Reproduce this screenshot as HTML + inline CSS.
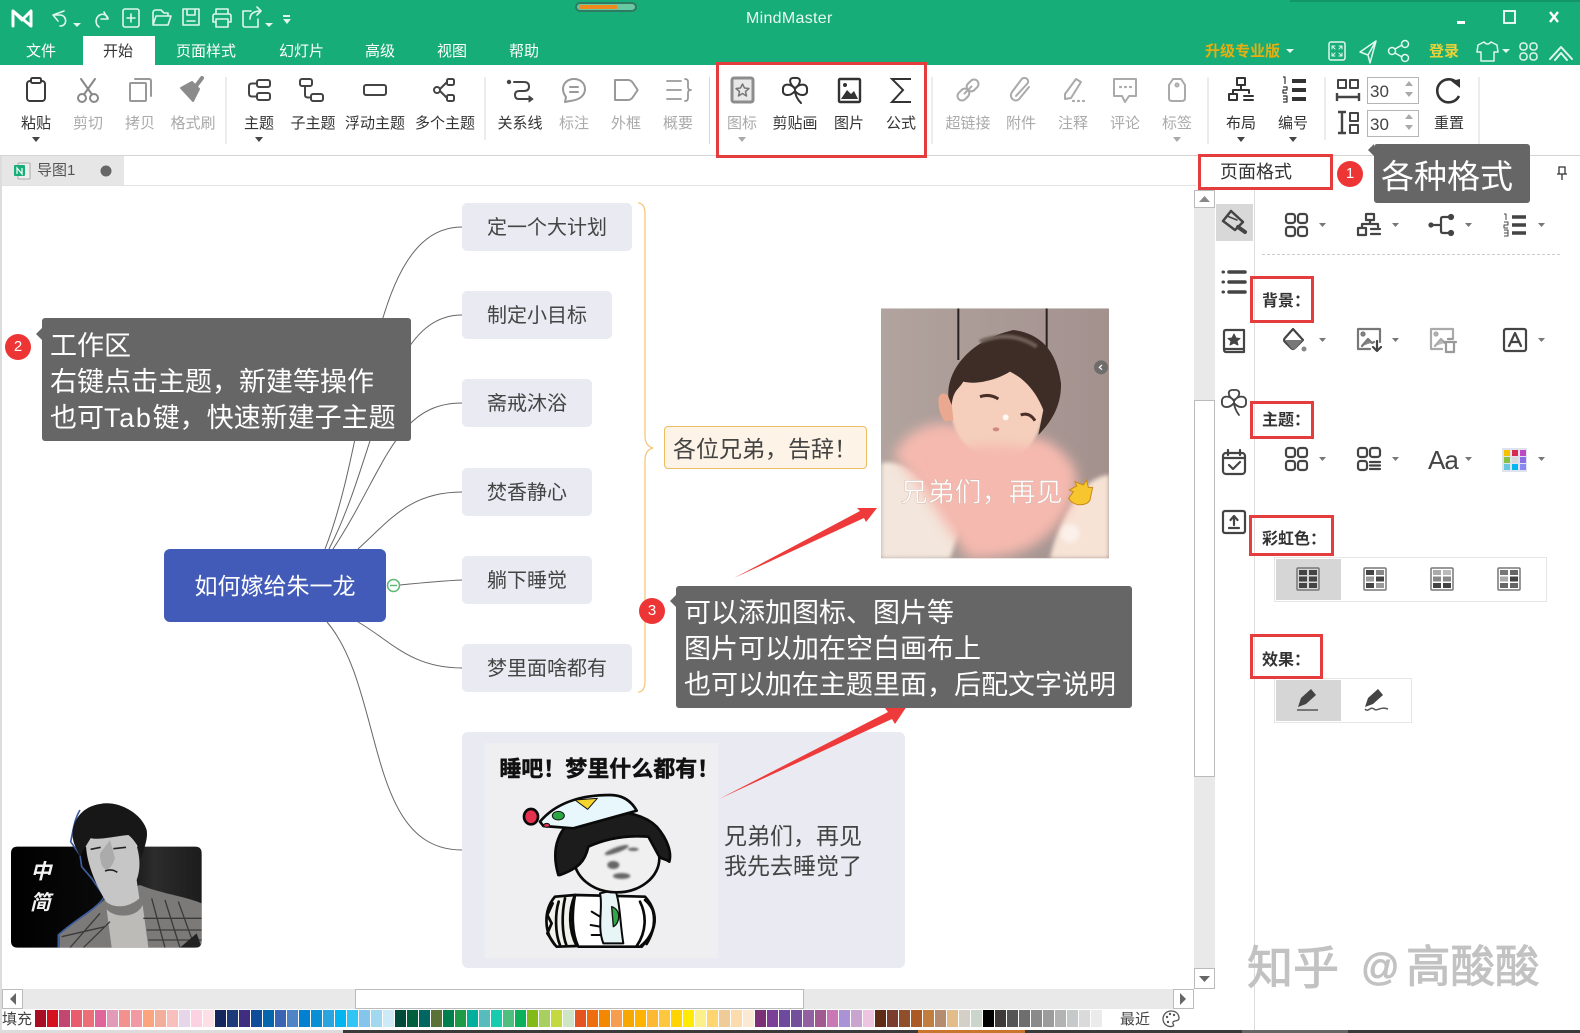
<!DOCTYPE html>
<html lang="zh">
<head>
<meta charset="utf-8">
<title>MindMaster</title>
<style>
html,body{margin:0;padding:0;background:#fff}
#p{position:relative;width:1580px;height:1033px;overflow:hidden;background:#fff;font-family:"Liberation Sans","Noto Sans CJK SC",sans-serif;color:#333}
#p div{position:absolute;box-sizing:border-box}
.c{white-space:nowrap;transform:translateX(-50%);font-size:15px;line-height:20px;top:114px;color:#333}
.g{color:#aaa}
.t{white-space:nowrap;font-size:15px;line-height:20px;top:42px;color:#fff}
.n{background:#e9eaf2;border-radius:5px;left:462px;height:48px;line-height:51px;padding-left:25px;font-size:20px;color:#444;white-space:nowrap}
.call{background:#666;border-radius:3px;color:#fff;font-size:27px;line-height:36px;white-space:nowrap}
.call:before{content:"";position:absolute;left:-6px;width:0;height:0;border:6px solid transparent;border-left:0;border-right-color:#666}
.b{width:26px;height:26px;border-radius:50%;background:#ee3535;color:#fff;font-size:15px;line-height:26px;text-align:center}
.r{border:3px solid #e53c3e}
.h{font-weight:700;font-size:16px;line-height:20px;color:#333;left:1262px;white-space:nowrap}
svg{position:absolute;left:0;top:0}
.s{display:flex;left:35px;top:1010px;height:17px}
.s i{display:block;width:11px;margin-right:1px;height:17px}
.w{top:938px;font-size:46px;line-height:60px;color:#c2c2c2;-webkit-text-stroke:1px #c2c2c2;white-space:nowrap}
</style>
</head>
<body>
<div id="p">
<div style="left:0;top:0;width:1580px;height:65px;background:#17ad78"></div>
<div style="left:1290px;top:0;width:290px;height:2px;background:#129568"></div>
<div style="left:83px;top:36px;width:72px;height:29px;background:#fff"></div>
<div class="t" style="left:26px">文件</div>
<div class="t" style="left:103px;color:#333">开始</div>
<div class="t" style="left:176px">页面样式</div>
<div class="t" style="left:279px">幻灯片</div>
<div class="t" style="left:365px">高级</div>
<div class="t" style="left:437px">视图</div>
<div class="t" style="left:509px">帮助</div>
<div style="left:746px;top:8px;font-size:16px;line-height:22px;color:#e8f8f2;letter-spacing:.3px">MindMaster</div>
<div style="left:575px;top:2px;width:62px;height:10px;border-radius:5px;background:#67c8a2;border:2px solid #2e7a62"></div>
<div style="left:579px;top:5px;width:38px;height:4px;background:#f08a1f"></div>
<div class="t" style="left:1205px;color:#e8ae10;font-weight:700;font-size:15px">升级专业版</div>
<div class="t" style="left:1429px;color:#e8d23a;font-weight:700">登录</div>

<!-- ribbon bottom -->
<div style="left:0;top:155px;width:1580px;height:1px;background:#d4d4d4"></div>
<div style="left:0;top:185px;width:1196px;height:1px;background:#e2e2e2"></div>
<div style="left:2px;top:156px;width:122px;height:29px;background:#e6e6e6"></div>
<div style="left:0;top:156px;width:2px;height:874px;background:#dcdcdc"></div>
<div style="left:37px;top:161px;font-size:15px;line-height:20px;color:#555">导图1</div>

<!-- ribbon labels -->
<div class="c" style="left:36px">粘贴</div>
<div class="c g" style="left:88px">剪切</div>
<div class="c g" style="left:140px">拷贝</div>
<div class="c g" style="left:193px">格式刷</div>
<div class="c" style="left:259px">主题</div>
<div class="c" style="left:313px">子主题</div>
<div class="c" style="left:375px">浮动主题</div>
<div class="c" style="left:445px">多个主题</div>
<div class="c" style="left:520px">关系线</div>
<div class="c g" style="left:574px">标注</div>
<div class="c g" style="left:626px">外框</div>
<div class="c g" style="left:678px">概要</div>
<div class="c g" style="left:742px">图标</div>
<div class="c" style="left:795px">剪贴画</div>
<div class="c" style="left:849px">图片</div>
<div class="c" style="left:901px">公式</div>
<div class="c g" style="left:968px">超链接</div>
<div class="c g" style="left:1021px">附件</div>
<div class="c g" style="left:1073px">注释</div>
<div class="c g" style="left:1125px">评论</div>
<div class="c g" style="left:1177px">标签</div>
<div class="c" style="left:1241px">布局</div>
<div class="c" style="left:1293px">编号</div>
<div class="c" style="left:1449px">重置</div>
<div style="left:1367px;top:77px;width:52px;height:27px;border:1px solid #b5b5b5;font-size:17px;line-height:28px;padding-left:2px;color:#444">30</div>
<div style="left:1367px;top:110px;width:52px;height:27px;border:1px solid #b5b5b5;font-size:17px;line-height:28px;padding-left:2px;color:#444">30</div>

<!-- connection lines -->
<svg width="1580" height="1033" fill="none" stroke="#666" stroke-width="1">
<path d="M325,549C372,430 368,227 462,227"/>
<path d="M329,549C378,455 385,315 462,315"/>
<path d="M333,549C385,470 395,403 462,403"/>
<path d="M358,549C390,520 410,492 462,492"/>
<path d="M400,585C420,583 440,581 462,580"/>
<path d="M358,622C390,640 410,668 462,668"/>
<path d="M327,622C385,690 365,850 462,850"/>
<path d="M638,203C643,203 645,207 645,214V436C645,444 649,447 653,448C649,449 645,452 645,460V681C645,688 643,692 638,692" stroke="#f4c878" stroke-width="1.300"/>
</svg>

<!-- nodes -->
<div style="left:164px;top:549px;width:222px;height:73px;background:#425bb9;border-radius:6px;color:#fff;font-size:23px;line-height:74px;text-align:center">如何嫁给朱一龙</div>
<div class="n" style="top:203px;width:170px">定一个大计划</div>
<div class="n" style="top:291px;width:150px">制定小目标</div>
<div class="n" style="top:379px;width:130px">斋戒沐浴</div>
<div class="n" style="top:468px;width:130px">焚香静心</div>
<div class="n" style="top:556px;width:130px">躺下睡觉</div>
<div class="n" style="top:644px;width:170px">梦里面啥都有</div>
<div style="left:664px;top:426px;width:203px;height:43px;background:#fdf3e6;border:1px solid #ecbd62;border-radius:4px;font-size:23px;line-height:44px;padding-left:8px;color:#444;white-space:nowrap">各位兄弟，告辞！</div>
<div style="left:462px;top:732px;width:443px;height:236px;background:#e9eaf2;border-radius:6px"></div>
<div style="left:485px;top:743px;width:233px;height:215px;background:#efeff1"></div>
<div style="left:724px;top:821px;font-size:23px;line-height:30px;color:#444;white-space:nowrap">兄弟们，再见<br>我先去睡觉了</div>

<!-- graphics -->
<svg width="1580" height="1033" fill="none">
<defs>
<filter id="f2" x="-30%" y="-30%" width="160%" height="160%"><feGaussianBlur stdDeviation="3"/></filter>
<filter id="f4" x="-30%" y="-30%" width="160%" height="160%"><feGaussianBlur stdDeviation="6"/></filter>
<filter id="f8" x="-30%" y="-30%" width="160%" height="160%"><feGaussianBlur stdDeviation="18"/></filter>
<linearGradient id="bg" x1="0" y1="0" x2="1" y2="0"><stop offset="0" stop-color="#b1a39e"/><stop offset="1" stop-color="#a3918e"/></linearGradient>
<linearGradient id="dk" x1="0" y1="0" x2="1" y2="0"><stop offset="0" stop-color="#000"/><stop offset=".55" stop-color="#0b0b0b"/><stop offset=".75" stop-color="#2c2c2c"/><stop offset="1" stop-color="#1c1c1c"/></linearGradient>
<clipPath id="ph"><rect x="33" y="25" width="684" height="750"/></clipPath>
<clipPath id="pc"><path d="M33,190Q33,170 53,170H585Q605,170 605,190V453Q605,473 585,473H53Q33,473 33,453Z"/></clipPath>
</defs>

<!-- title bar icons -->
<g stroke="#dff6ee" stroke-width="1.600" stroke-linecap="round" stroke-linejoin="round">
<path d="M13,26V11L22,20L31,11V26M13,11L31,26" stroke="#fff" stroke-width="3" stroke-linejoin="round"/>
<path d="M64,11L53,15L58,21M53,15H60C67,15 68,26 60,26"/>
<path d="M104,12L108,19L101,19M108,18C104,10 93,16 97,25L99,27"/>
<rect x="123" y="9" width="16" height="18" rx="2"/><path d="M131,14V22M127,18H135"/>
<path d="M153,24V13Q153,10 156,10H161L164,13H168V16M153,25L156,16H171L168,25Z"/>
<path d="M183,9H199V25H183ZM187,9V15H195V9M187,21H195"/>
<path d="M216,14V9H228V14M213,22V16Q213,14 215,14H229Q231,14 231,16V22H228M213,22H216M216,19H228V27H216Z"/>
<path d="M243,25V11H251M243,25Q243,27 245,27H258V19M250,19Q250,11 261,11M257,7L261,11L257,15"/>
</g>
<g fill="#dff6ee">
<path d="M73,23H81L77,27ZM265,23H273L269,27Z"/>
<path d="M283,15H290V17H283ZM283,19H291L287,24Z"/>
</g>
<path d="M1457,21H1465V24H1457Z" fill="#fff"/>
<path d="M1504,11H1515V23H1504Z" stroke="#fff" stroke-width="1.800"/>
<path d="M1550,12L1558,22M1558,12L1550,22" stroke="#fff" stroke-width="2.400"/>
<path d="M1286,49H1294L1290,53Z" fill="#e8f8f2"/>
<g stroke="#e2f7ef" stroke-width="1.500" stroke-linejoin="round" stroke-linecap="round">
<rect x="1329" y="42" width="16" height="18" rx="2"/>
<path d="M1332,46L1335,49M1332,46H1335M1332,46V49M1342,46L1339,49M1342,46H1339M1342,46V49M1332,56L1335,53M1332,56H1335M1332,56V53M1342,56L1339,53M1342,56H1339M1342,56V53" stroke-width="1"/>
<path d="M1376,41L1360,52L1368,55L1370,63ZM1376,41L1368,55"/>
<circle cx="1392" cy="51" r="3.500"/><circle cx="1405" cy="44" r="3.500"/><circle cx="1405" cy="58" r="3.500"/><path d="M1395,49L1402,45M1395,53L1402,57"/>
<path d="M1484,42L1478,45L1477,52L1481,52V61H1494V52L1498,52L1497,45L1491,42Q1487.500,46 1484,42Z"/>
<rect x="1520" y="43" width="7" height="7" rx="3"/><rect x="1530" y="43" width="7" height="7" rx="3"/><rect x="1520" y="53" width="7" height="7" rx="3"/><rect x="1530" y="53" width="7" height="7" rx="3"/>
<path d="M1550,59L1561,47L1572,59M1555,60L1561,53L1567,60" stroke-width="2"/>
</g>
<path d="M1502,49H1510L1506,53Z" fill="#e2f7ef"/>

<!-- separators -->
<path d="M226,77V144M485,77V140M709.500,77V144M932,77V144M1208,77V144M1325,77V140M1479,77V144" stroke="#d8d8d8"/>

<!-- ribbon icons -->
<g stroke-width="2" stroke-linejoin="round" stroke-linecap="round">
<g transform="translate(36,90)" stroke="#3a3a3a"><rect x="-9" y="-9" width="18" height="20" rx="3"/><rect x="-5" y="-12" width="10" height="5" rx="1.500" fill="#fff"/></g>
<g transform="translate(88,90)" stroke="#888"><circle cx="-6" cy="8" r="4"/><circle cx="6" cy="8" r="4"/><path d="M-4,4.500L7,-11M4,4.500L-7,-11"/></g>
<g transform="translate(140,90)" stroke="#999"><rect x="-10" y="-7" width="16" height="18" rx="1"/><path d="M-5,-11H9Q11,-11 11,-9V6"/></g>
<g transform="translate(192,90)"><path d="M-11,-2L0,-8L7,-1L1,11Z" fill="#8b8b8b" stroke="#8b8b8b"/><path d="M4,-4L10,-12" stroke="#8b8b8b" stroke-width="4"/></g>
<g transform="translate(259,90)" stroke="#444"><rect x="-2" y="-10" width="13" height="7" rx="2"/><rect x="-2" y="3" width="13" height="7" rx="2"/><path d="M-2,-6.500H-7Q-10,-6.500 -10,-3.500V3.500Q-10,6.500 -7,6.500H-2"/></g>
<g transform="translate(313,90)" stroke="#444"><rect x="-13" y="-11" width="12" height="7" rx="2"/><rect x="-2" y="4" width="12" height="7" rx="2"/><path d="M-8,-4V5Q-8,7.500 -5,7.500H-2"/></g>
<g transform="translate(375,90)" stroke="#444"><rect x="-11" y="-5" width="22" height="10" rx="2"/></g>
<g transform="translate(445,90)" stroke="#444"><circle cx="-8" cy="0" r="3"/><rect x="2" y="-11" width="7" height="6" rx="1.500"/><rect x="2" y="5" width="7" height="6" rx="1.500"/><path d="M-5,-1L2,-8M-5,1L2,8"/></g>
<g transform="translate(520,90)" stroke="#444"><circle cx="-11" cy="-8" r="1.200" fill="#444"/><path d="M-6,-8H4Q9,-8 9,-3.500Q9,1 4,1H-1Q-5,1 -5,5Q-5,9 -1,9H8"/><path d="M9,6L13,9L9,12Z" fill="#444" stroke-width="1"/></g>
<g transform="translate(574,90)" stroke="#999"><path d="M-4,11L-9,12L-8,7Q-11,3 -11,-1C-11,-7 -6,-11 0,-11C6,-11 11,-7 11,-1C11,6 5,10 -4,11Z"/><path d="M-4,-3H4M-4,2H4"/></g>
<g transform="translate(626,90)" stroke="#999"><path d="M-11,-10H2Q5,-10 7,-7L11,-1Q12,0 11,1L7,7Q5,10 2,10H-11Z"/></g>
<g transform="translate(678,90)" stroke="#999"><path d="M-11,-9H3M-11,0H3M-11,9H3M7,-11Q10,-11 10,-8V-3Q10,0 13,0Q10,0 10,3V8Q10,11 7,11" stroke-width="1.800"/></g>
<g transform="translate(742,90)"><rect x="-10" y="-12" width="21" height="24" rx="2" stroke="#8d8d8d" stroke-width="3" fill="#e8e8e8"/><path d="M.5,-6L2.500,-2L7,-1.500L3.500,1.500L4.500,6L.5,3.500L-3.500,6L-2.500,1.500L-6,-1.500L-1.500,-2Z" stroke="#777" stroke-width="1.500"/></g>
<g transform="translate(795,90)" stroke="#333"><path d="M0,-2C-6,-6 -7,-13 0,-12C7,-13 6,-6 0,-2ZM0,-1C-4,-7 -13,-7 -12,0C-13,6 -5,7 0,1ZM0,-1C4,-7 13,-7 12,0C13,6 5,7 0,1ZM0,0C0,5 2,9 6,13"/></g>
<g transform="translate(849,90)"><rect x="-10" y="-11" width="21" height="23" rx="1" stroke="#333" stroke-width="2.400"/><path d="M-8,9L-2,0L2,4L5,1L9,9Z" fill="#333"/><circle cx="-4" cy="-5" r="2" fill="#333"/></g>
<g transform="translate(901,90)" stroke="#333"><path d="M10,-11H-9L2,0L-9,12H10" stroke-linecap="butt" stroke-linejoin="miter"/></g>
<g transform="translate(968,90)" stroke="#aaa"><g transform="rotate(-45)"><rect x="-13" y="-4.500" width="13" height="9" rx="4.500"/><rect x="0" y="-4.500" width="13" height="9" rx="4.500"/><path d="M-5,0H5"/></g></g>
<g transform="translate(1021,90)" stroke="#aaa"><path d="M-5,6L6,-6C10,-10 3,-15 0,-10L-9,2C-13,8 -5,14 -1,8L8,-3"/></g>
<g transform="translate(1073,90)" stroke="#aaa"><path d="M-8,4L3,-11L8,-8L-2,8L-8,9Z"/><path d="M0,11H1M5,11H6M10,11H11" stroke-width="2.200"/></g>
<g transform="translate(1125,90)" stroke="#aaa"><path d="M-11,-11H11V6H4L0,12L-3,6H-11Z"/><path d="M-5,-3H-4M0,-3H1M5,-3H6" stroke-width="2.200"/></g>
<g transform="translate(1177,90)" stroke="#aaa"><path d="M-4,-11H4L8,-5V8Q8,11 5,11H-5Q-8,11 -8,8V-5Z"/><circle cx="0" cy="-5" r="1.500"/></g>
<g transform="translate(1241,90)" stroke="#333"><rect x="-4" y="-12" width="8" height="7"/><path d="M0,-5V0M-8,3V0H8V3"/><rect x="-12" y="4" width="8" height="6"/><path d="M3,6H12M3,10H12"/></g>
<g transform="translate(1293,90)"><path d="M-1,-9H13M-1,0H13M-1,9H13" stroke="#333" stroke-width="4" stroke-linecap="butt"/><path d="M-10,-13H-8V-6M-10,-3H-6V0H-10V3H-6M-10,6H-6V12H-10M-10,9H-6" stroke="#333" stroke-width="1.200" stroke-linecap="butt"/></g>
<g transform="translate(1348,0)" stroke="#444" stroke-linecap="butt"><rect x="-10" y="80" width="8" height="8"/><rect x="2" y="80" width="8" height="8"/><path d="M-11,93V101M11,93V101M-11,97H11" stroke-width="2.400"/>
<path d="M-10,112H-2M-10,133H-2M-6,112V133" stroke-width="2.400"/><rect x="2" y="113" width="8" height="8"/><rect x="2" y="125" width="8" height="8"/></g>
<path d="M1458,84A11.500,11.500 0 1 0 1459,96" stroke="#333" stroke-width="2.600" stroke-linecap="butt"/>
</g>
<path d="M1451,81L1460,88L1460,79Z" fill="#333"/>
<g fill="#aaa"><path d="M1409,81L1413,86H1405ZM1409,97L1413,92H1405ZM1409,114L1413,119H1405ZM1409,130L1413,125H1405Z"/></g>
<g fill="#444"><path d="M32,137H40L36,142ZM255,137H263L259,142ZM1237,137H1245L1241,142ZM1289,137H1297L1293,142Z"/></g>
<g fill="#aaa"><path d="M738,137H746L742,142ZM1173,137H1181L1177,142Z"/></g>

<!-- tab icon -->
<rect x="18" y="163" width="12" height="16" rx="1" fill="#eee" stroke="#aaa"/>
<rect x="14" y="165" width="11" height="11" rx="1" fill="#17ad78"/>
<path d="M17,174V168L22,174V168" stroke="#fff" stroke-width="1.200"/>
<circle cx="106" cy="171" r="5.500" fill="#666"/>

<!-- pin -->
<path d="M1559,167H1565V174H1559ZM1557,174H1567M1562,174V180" stroke="#333" stroke-width="1.300"/>

<!-- v scrollbar -->
<rect x="1194" y="190" width="21" height="798" fill="#e9e9e9"/>
<rect x="1194.500" y="190.500" width="20" height="17" fill="#fff" stroke="#bbb"/>
<path d="M1199,202L1204.500,196L1210,202Z" fill="#888"/>
<rect x="1194.500" y="400.500" width="20" height="376" fill="#fff" stroke="#bbb"/>
<rect x="1194.500" y="968.500" width="20" height="20" fill="#fff" stroke="#bbb"/>
<path d="M1199,976L1204.500,982L1210,976Z" fill="#666"/>
<path d="M1254.500,190V1030" stroke="#dcdcdc"/>
<rect x="1216" y="204" width="37" height="37" fill="#d8d8d8"/>
<!-- h scrollbar -->
<rect x="2" y="989" width="1192" height="20" fill="#e9e9e9"/>
<rect x="2.500" y="989.500" width="20" height="19" fill="#fff" stroke="#bbb"/>
<path d="M16,993L10,999L16,1005Z" fill="#666"/>
<rect x="355.500" y="989.500" width="448" height="19" fill="#fff" stroke="#bbb"/>
<rect x="1173.500" y="989.500" width="20" height="19" fill="#fff" stroke="#bbb"/>
<path d="M1180,993L1186,999L1180,1005Z" fill="#666"/>

<!-- panel icons -->
<g stroke="#444" stroke-width="2.200" stroke-linejoin="round" stroke-linecap="round">
<g transform="translate(1234,222)"><path d="M-11,-1L-3,-11L9,0L1,8Z" stroke-width="2.500"/><path d="M4,5L11,10" stroke-width="4"/><path d="M-7,-6L3,-2" stroke-width="1.500"/></g>
<g transform="translate(1234,282)"><path d="M-5,-10H11M-5,0H11M-5,10H11" stroke-width="3.500"/><path d="M-11,-10H-10.500M-11,0H-10.500M-11,10H-10.500" stroke-width="3"/></g>
<g transform="translate(1234,342)"><path d="M-10,7V-10Q-10,-12 -8,-12H10V10H-8Q-10,10 -10,7ZM-9,7H10"/><path d="M0,-8L2,-4L6,-3.500L3,-1L4,3L0,1L-4,3L-3,-1L-6,-3.500L-2,-4Z" fill="#444" stroke-width="1"/></g>
<g transform="translate(1234,402)" stroke-width="1.800"><path d="M0,-2C-7,-6 -7,-13 0,-12C7,-13 7,-6 0,-2ZM0,-1C-4,-7 -13,-7 -12,0C-13,6 -5,7 0,1ZM0,-1C4,-7 13,-7 12,0C13,6 5,7 0,1ZM0,0C0,5 2,9 5,13"/></g>
<g transform="translate(1234,462)"><rect x="-11" y="-9" width="22" height="21" rx="3"/><path d="M-11,-4H11M-6,-12V-7M6,-12V-7M-5,3L-1,7L6,0"/></g>
<g transform="translate(1234,522)"><rect x="-11" y="-11" width="22" height="22" rx="2" stroke-width="2.200"/><path d="M-5,6H5M0,3V-5M-3.500,-2L0,-6L3.500,-2"/></g>

<g transform="translate(1296,225)"><rect x="-10" y="-11" width="9" height="9" rx="2.500"/><rect x="2" y="-11" width="9" height="9" rx="2.500"/><rect x="-10" y="2" width="9" height="9" rx="2.500"/><rect x="2" y="2" width="9" height="9" rx="2.500"/></g>
<g transform="translate(1369,225)"><rect x="-3" y="-11" width="8" height="6"/><path d="M1,-5V-1M-7,2V-1H9V2"/><rect x="-11" y="3" width="8" height="7"/><path d="M2,4H11M2,9H11"/></g>
<g transform="translate(1442,225)"><circle cx="-11" cy="0" r="1.500" fill="#444"/><path d="M-9,0H-1M-1,0V-6Q-1,-8 1,-8H6M-1,0V6Q-1,8 1,8H6"/><circle cx="9" cy="-8" r="2" fill="#444"/><circle cx="9" cy="8" r="2" fill="#444"/></g>
<g transform="translate(1515,225)"><path d="M-3,-8H11M-3,0H11M-3,8H11" stroke-width="3.500" stroke-linecap="butt"/><path d="M-11,-11H-9V-5M-11,-3H-7V0H-11V3H-7M-11,5H-7V11H-11M-11,8H-7" stroke-width="1" stroke-linecap="butt"/></g>

<g transform="translate(1294,340)"><path d="M-1,-11L-9,-2Q-11,0 -9,2L-3,8Q-1,10 1,8L9,0Z" stroke-width="2.200"/><path d="M-9,0H9L1,9Q-1,10 -3,8Z" fill="#777" stroke="none"/><circle cx="10" cy="9" r="2.500" fill="#888" stroke="none"/></g>
<g transform="translate(1369,340)" stroke="#777"><path d="M-11,8V-11H11V2M-11,9H1"/><path d="M-7,6L-1,-1L3,3L5,2" fill="#888"/><circle cx="-6" cy="-6" r="1.500"/><path d="M8,1V10M4,7L8,11L12,7" stroke="#444"/></g>
<g transform="translate(1442,340)" stroke="#aaa"><path d="M-11,8V-11H11V-1M-11,9H0"/><path d="M-7,6L-1,-1L3,3" fill="#bbb"/><circle cx="-6" cy="-6" r="1.500"/><path d="M2,2H14M4,2V12H12V2M6,-1H10" stroke="#999"/></g>
<g transform="translate(1515,340)"><rect x="-11" y="-11" width="22" height="22" rx="2" stroke-width="2.200"/><path d="M-6,6L0,-7L6,6M-4,2H4"/></g>

<g transform="translate(1296,459)"><rect x="-10" y="-11" width="9" height="9" rx="2.500"/><rect x="2" y="-11" width="9" height="9" rx="2.500"/><rect x="-10" y="2" width="9" height="9" rx="2.500"/><rect x="2" y="2" width="9" height="9" rx="2.500"/></g>
<g transform="translate(1369,459)"><rect x="-11" y="-11" width="9" height="9" rx="2.500"/><rect x="1" y="-11" width="10" height="9" rx="2.500"/><rect x="-11" y="2" width="9" height="9" rx="2.500"/><path d="M1,3H11M1,6.500H11M1,10H11"/></g>
</g>
<text x="1428" y="469" font-family="Liberation Sans,sans-serif" font-size="26" fill="#444" letter-spacing="-1">Aa</text>
<g transform="translate(1502,448)"><rect x="0" y="0" width="25" height="24" fill="#dfe3ee"/>
<rect x="2" y="2" width="6" height="6" fill="#f6c200"/><rect x="10" y="2" width="6" height="6" fill="#d6294f"/><rect x="18" y="2" width="6" height="6" fill="#bf49c0"/>
<rect x="2" y="9" width="6" height="6" fill="#83c341"/><rect x="10" y="9" width="6" height="6" fill="#d9d9d9"/><rect x="18" y="9" width="6" height="6" fill="#8d6ee6"/>
<rect x="2" y="16" width="6" height="6" fill="#69c6dc"/><rect x="10" y="16" width="6" height="6" fill="#00b7f0"/><rect x="18" y="16" width="6" height="6" fill="#8a88f2"/></g>
<g fill="#777"><path d="M1319,223H1326L1322.500,227ZM1392,223H1399L1395.500,227ZM1465,223H1472L1468.500,227ZM1538,223H1545L1541.500,227Z"/>
<path d="M1319,338H1326L1322.500,342ZM1392,338H1399L1395.500,342ZM1538,338H1545L1541.500,342Z"/>
<path d="M1319,457H1326L1322.500,461ZM1392,457H1399L1395.500,461ZM1465,457H1472L1468.500,461ZM1538,457H1545L1541.500,461Z"/></g>
<path d="M1262,254.500H1560" stroke="#ccc" stroke-dasharray="3 2"/>

<!-- rainbow -->
<rect x="1274.500" y="557.500" width="272" height="44" stroke="#e6e6e6"/>
<rect x="1276" y="559" width="65" height="41" fill="#d6d6d6"/>
<g stroke="#777" stroke-width="1.500">
<rect x="1297" y="568" width="22" height="22" rx="1"/><rect x="1364" y="568" width="22" height="22" rx="1" fill="#fff"/><rect x="1431" y="568" width="22" height="22" rx="1" fill="#fff"/><rect x="1498" y="568" width="22" height="22" rx="1" fill="#fff"/></g>
<g fill="#444">
<rect x="1299" y="570" width="8" height="5"/><rect x="1309" y="570" width="8" height="5"/><rect x="1299" y="576.500" width="8" height="5"/><rect x="1309" y="576.500" width="8" height="5"/><rect x="1299" y="583" width="8" height="5"/><rect x="1309" y="583" width="8" height="5"/>
<rect x="1366" y="570" width="8" height="5"/><rect x="1376" y="570" width="8" height="5" fill="#888"/><rect x="1366" y="576.500" width="8" height="5" fill="#999"/><rect x="1376" y="576.500" width="8" height="5"/><rect x="1366" y="583" width="8" height="5"/><rect x="1376" y="583" width="8" height="5" fill="#999"/>
<rect x="1433" y="570" width="8" height="5" fill="#aaa"/><rect x="1443" y="570" width="8" height="5" fill="#bbb"/><rect x="1433" y="576.500" width="8" height="5" fill="#888"/><rect x="1443" y="576.500" width="8" height="5" fill="#888"/><rect x="1433" y="583" width="8" height="5"/><rect x="1443" y="583" width="8" height="5"/>
<rect x="1500" y="570" width="8" height="5" fill="#777"/><rect x="1510" y="570" width="8" height="5" fill="#666"/><rect x="1500" y="576.500" width="8" height="5" fill="#aaa"/><rect x="1510" y="576.500" width="8" height="5"/><rect x="1500" y="583" width="8" height="5" fill="#666"/><rect x="1510" y="583" width="8" height="5" fill="#666"/>
</g>
<!-- effects -->
<rect x="1274.500" y="678.500" width="137" height="44" stroke="#e6e6e6"/>
<rect x="1276" y="680" width="65" height="41" fill="#d6d6d6"/>
<path d="M1298,707L1301,698L1311,689L1316,695L1306,704Z" fill="#444"/>
<path d="M1297,710H1318" stroke="#777" stroke-width="2"/>
<path d="M1365,707L1368,698L1378,689L1383,695L1373,704Z" fill="#444"/>
<path d="M1365,709C1368,713 1370,706 1374,709C1377,712 1380,706 1388,709" stroke="#555" stroke-width="1.500"/>

<!-- arrows -->
<path d="M734,578L860,511L857,508L877,508L866,522L864,518Z" fill="#ee3a3a"/>
<path d="M719,799L888,712L885,708L907,706L895,724L892,719Z" fill="#ee3a3a"/>

<!-- expand -->
<circle cx="393.500" cy="585.500" r="6" fill="#fff" stroke="#5cb874" stroke-width="1.500"/>
<path d="M390,585.500H397" stroke="#5cb874" stroke-width="1.500"/>

<!-- photo -->
<g transform="translate(870,300) scale(.33333)">
<g clip-path="url(#ph)">
<rect x="33" y="25" width="684" height="750" fill="url(#bg)"/>
<path d="M265,25V180M530,25V260" stroke="#2a2222" stroke-width="6"/>
<path d="M33,490C120,470 190,560 270,690L240,775H33Z" fill="#f3e6dc" filter="url(#f4)"/>
<path d="M540,775C570,640 640,530 717,525V775Z" fill="#f7e3d6" filter="url(#f4)"/>
<path d="M70,470C100,400 160,370 230,370L530,420C600,470 650,510 600,620C540,720 470,775 300,775C230,690 140,530 70,470Z" fill="#f5b9af" filter="url(#f8)"/>
<path d="M240,300C240,420 310,470 390,480C470,480 530,400 525,260L400,170L270,210Z" fill="#f5cfbc" filter="url(#f2)"/>
<ellipse cx="380" cy="490" rx="170" ry="55" fill="#f5b9af" filter="url(#f8)"/>
<path d="M205,300C205,275 235,270 245,310L250,360L225,365Q205,340 205,300Z" fill="#e9a88f"/>
<path d="M235,290C230,210 300,120 430,90C510,100 560,150 573,250C575,320 540,370 505,405L520,330C500,280 470,240 420,215C380,240 320,255 280,245C265,270 250,270 245,315Z" fill="#3e2d27"/>
<path d="M330,125C380,105 440,100 500,140" stroke="#6f6158" stroke-width="12" filter="url(#f2)"/>
<path d="M330,290Q360,280 385,297" stroke="#4a2e28" stroke-width="9"/>
<path d="M452,345Q478,335 495,362" stroke="#4a2e28" stroke-width="9"/>
<circle cx="407" cy="352" r="9" fill="#fff7f2"/><ellipse cx="378" cy="388" rx="10" ry="6" fill="#d08a80"/>
<circle cx="600" cy="700" r="28" fill="#fff" opacity=".5" filter="url(#f4)"/>
</g>
<text x="92" y="604" font-family="Liberation Sans,Noto Sans CJK SC,sans-serif" font-size="81" fill="#fff" stroke="#c9a69a" stroke-width="1">兄弟们，再见</text>
<path d="M596,595L610,575L598,570L620,558L615,545L640,555L650,540L655,562L668,562L660,600C650,620 610,620 596,595Z" fill="#f7c62f" stroke="#c78a1c" stroke-width="3"/>
<circle cx="693" cy="202" r="21" fill="#666" opacity=".85"/>
<path d="M696,195L688,202L696,209" stroke="#fff" stroke-width="3.500"/>
</g>

<!-- meme -->
<g transform="translate(460,720) scale(.33333)" stroke-linejoin="round" stroke-linecap="round">
<text x="118" y="170" font-family="Liberation Sans,Noto Sans CJK SC,sans-serif" font-weight="700" font-size="66" fill="#111" stroke="#111" stroke-width="1.500">睡吧！梦里什么都有！</text>
<g stroke="#0a0a0a" stroke-width="8">
<path d="M285,530C250,570 250,640 290,680L350,678C325,630 325,570 345,525Z" fill="#f2f2ec"/>
<path d="M345,525C335,580 335,640 355,680H540C590,640 600,580 555,530Z" fill="#fff"/>
<path d="M278,550L262,585L275,610L262,640L285,675M296,545C285,580 285,640 300,675M315,535C305,580 305,640 320,678" stroke-width="8"/>
<path d="M555,540C590,570 600,620 545,680M570,550C590,590 585,630 560,672M540,545C560,585 560,635 530,678" stroke-width="8"/>
<path d="M420,520C430,560 410,620 430,670H490C480,610 480,540 465,510Z" fill="#e7f5f6" stroke-width="6"/>
<path d="M395,575L420,590M392,615L420,620M395,645L420,645" stroke-width="6"/>
<ellipse cx="213" cy="290" rx="21" ry="23" fill="#e5304e"/>
<ellipse cx="470" cy="415" rx="128" ry="102" fill="#f0f0f0"/>
<path d="M295,465C270,380 300,320 350,295C430,262 540,270 590,320C625,360 635,400 628,425C615,415 605,420 595,405L565,350C500,345 440,355 385,380C375,425 355,445 300,465Z" fill="#1c1c1c"/>
<path d="M240,305C290,245 370,225 450,225C490,225 515,245 530,272L340,325L250,318Z" fill="#e8f7fb"/>
</g>
<path d="M345,240L412,235L383,268Z" fill="#f6d52c" stroke="#111" stroke-width="3"/>
<ellipse cx="295" cy="287" rx="18" ry="13" fill="#2aa744" stroke="#111" stroke-width="3"/>
<ellipse cx="260" cy="316" rx="9" ry="6" fill="#d8324e" stroke="#111" stroke-width="3"/>
<path d="M455,560C485,570 480,610 460,620Z" fill="#2fa84a" stroke="#111" stroke-width="4"/>
<g filter="url(#f2)" fill="#666"><ellipse cx="470" cy="390" rx="38" ry="8" transform="rotate(-20 470 390)"/><ellipse cx="460" cy="435" rx="18" ry="12"/><ellipse cx="485" cy="468" rx="26" ry="9"/><ellipse cx="520" cy="388" rx="16" ry="5"/></g>
</g>

<!-- portrait -->
<g transform="translate(0,790) scale(.33333)">
<path d="M33,190Q33,170 53,170H585Q605,170 605,190V453Q605,473 585,473H53Q33,473 33,453Z" fill="url(#dk)"/>
<g clip-path="url(#pc)">
<path d="M178,473V432C230,385 300,350 320,320L420,285C480,310 560,320 605,340V473Z" fill="#7c7a79"/>
<path d="M320,358C345,385 410,385 428,345L445,473H335Z" fill="#bdbbb8"/>
<path d="M210,473L300,370M250,473L330,395M185,440L315,410M455,325L495,473M495,330L540,473M535,335L585,473M430,385H605M440,420H605M445,450H605" stroke="#3a3a3a" stroke-width="4"/>
<path d="M540,473L590,430L605,473Z" fill="#222"/>
</g>
<path d="M175,473V435C230,385 295,355 313,320L275,265L245,230L240,195L212,155C220,120 222,90 240,60" stroke="#3f5e9e" stroke-width="5" fill="none"/>
<path d="M318,335C285,280 255,210 258,150L395,130C420,180 425,230 410,270L418,325C385,355 340,355 318,335Z" fill="#c6c6c6"/>
<path d="M300,190C300,240 325,260 345,205L330,150Z" fill="#8a8a8a" opacity=".45"/>
<path d="M222,160C205,105 240,50 300,42C355,30 425,70 440,120C445,150 430,175 425,205C418,170 402,148 385,135C340,140 300,150 272,145C258,165 246,190 240,200Z" fill="#171717"/>
<path d="M272,178L302,172M340,176L378,172M315,243Q335,235 352,247" stroke="#222" stroke-width="5" fill="none"/>
<g font-family="Liberation Sans,Noto Sans CJK SC,sans-serif" font-weight="700" font-style="italic" fill="#f2f2f2"><text x="92" y="265" font-size="62">中</text><text x="90" y="358" font-size="62">简</text></g>
</g>

<!-- palette -->
<g transform="translate(1171,1019)"><path d="M0,-8C6,-8 8,-4 8,-1C8,3 3,1 2,3C1,5 4,6 2,7C-3,9 -8,5 -8,0C-8,-5 -4,-8 0,-8Z" stroke="#555" stroke-width="1.300"/><circle cx="-4" cy="-2" r="1.200" fill="#555"/><circle cx="-1" cy="-5" r="1.200" fill="#555"/><circle cx="3" cy="-4" r="1.200" fill="#555"/><circle cx="-3" cy="3" r="1.200" fill="#555"/></g>
</svg>

<!-- callouts -->
<div class="call" style="left:42px;top:318px;width:369px;height:123px;padding:10px 0 0 8px">工作区<br>右键点击主题，新建等操作<br>也可<span style="letter-spacing:1.700px">Tab</span>键，快速新建子主题</div>
<div class="b" style="left:5px;top:334px">2</div>
<div class="call" style="left:676px;top:586px;width:456px;height:122px;padding:9px 0 0 8px">可以添加图标、图片等<br>图片可以加在空白画布上<br>也可以加在主题里面，后配文字说明</div>
<div class="b" style="left:639px;top:598px">3</div>
<div class="call" style="left:1374px;top:144px;width:156px;height:59px;font-size:33px;line-height:65px;padding-left:7px">各种格式</div>
<div class="b" style="left:1337px;top:161px">1</div>

<!-- red boxes -->
<div class="r" style="left:716px;top:62px;width:211px;height:96px"></div>
<div class="r" style="left:1198px;top:154px;width:135px;height:36px"></div>
<div style="left:1220px;top:160px;font-size:18px;line-height:24px;color:#333;white-space:nowrap">页面格式</div>
<div class="r" style="left:1250px;top:276px;width:64px;height:47px"></div>
<div class="h" style="top:292px">背景：</div>
<div class="r" style="left:1250px;top:401px;width:64px;height:38px"></div>
<div class="h" style="top:411px">主题：</div>
<div class="r" style="left:1249px;top:515px;width:85px;height:41px"></div>
<div class="h" style="top:530px">彩虹色：</div>
<div class="r" style="left:1250px;top:634px;width:73px;height:45px"></div>
<div class="h" style="top:651px">效果：</div>

<!-- watermark -->
<div class="w" style="left:1247px">知乎</div>
<div class="w" style="left:1361px;font-size:38px">@</div>
<div class="w" style="left:1406px;font-size:44.500px">高酸酸</div>

<!-- colour bar -->
<div style="left:2px;top:1010px;font-size:15px;line-height:20px;color:#444">填充</div>
<div class="s">
<i style="background:#a80e23"></i><i style="background:#d5101f"></i><i style="background:#c24770"></i><i style="background:#e85c6e"></i><i style="background:#ec6f78"></i><i style="background:#e0659a"></i><i style="background:#e29ab9"></i><i style="background:#f2928f"></i><i style="background:#f19aa4"></i><i style="background:#fca47e"></i><i style="background:#f3ae9b"></i><i style="background:#f8bfbd"></i><i style="background:#e7d6ea"></i><i style="background:#fcd2e2"></i><i style="background:#fde0e5"></i>
<i style="background:#14265a"></i><i style="background:#1e3a78"></i><i style="background:#3f2e80"></i><i style="background:#0f4c9a"></i><i style="background:#0566ad"></i><i style="background:#3c64b4"></i><i style="background:#4f85c6"></i><i style="background:#0480d0"></i><i style="background:#0a8fd4"></i><i style="background:#2aa5e0"></i><i style="background:#02b4f0"></i><i style="background:#30c5f5"></i><i style="background:#85c5ec"></i><i style="background:#a2d7f0"></i><i style="background:#cfeaf7"></i>
<i style="background:#004a3a"></i><i style="background:#005f3c"></i><i style="background:#00665f"></i><i style="background:#5a7236"></i><i style="background:#007f4e"></i><i style="background:#1f9a46"></i><i style="background:#00af9c"></i><i style="background:#58bcbd"></i><i style="background:#17cbae"></i><i style="background:#4fbf80"></i><i style="background:#0ab05a"></i><i style="background:#82bb18"></i><i style="background:#a8d060"></i><i style="background:#c4d83f"></i><i style="background:#cde4c5"></i>
<i style="background:#e55420"></i><i style="background:#ee6d0e"></i><i style="background:#f38800"></i><i style="background:#f69d4f"></i><i style="background:#f7a800"></i><i style="background:#ffb300"></i><i style="background:#fdb933"></i><i style="background:#fdc83f"></i><i style="background:#ffd400"></i><i style="background:#ffea00"></i><i style="background:#fbf08a"></i><i style="background:#ffd56f"></i><i style="background:#efcc97"></i><i style="background:#fcdcad"></i><i style="background:#fbe9d3"></i>
<i style="background:#7b3075"></i><i style="background:#7b3f98"></i><i style="background:#6e4a9e"></i><i style="background:#744f9c"></i><i style="background:#9361a2"></i><i style="background:#a15a8f"></i><i style="background:#c977b5"></i><i style="background:#a993d6"></i><i style="background:#c9a4cf"></i><i style="background:#edc5e0"></i>
<i style="background:#5f2a16"></i><i style="background:#7a3c2f"></i><i style="background:#8f4f2b"></i><i style="background:#ab5a26"></i><i style="background:#c27e3f"></i><i style="background:#b68c70"></i><i style="background:#e2bd8a"></i><i style="background:#d4cfc7"></i><i style="background:#ccd5cb"></i>
<i style="background:#000"></i><i style="background:#3f3a3a"></i><i style="background:#555"></i><i style="background:#6e6e6e"></i><i style="background:#8a8a8a"></i><i style="background:#9c9c9c"></i><i style="background:#b3b3b3"></i><i style="background:#c6c9c9"></i><i style="background:#dadada"></i><i style="background:#ebebeb"></i>
</div>
<div style="left:1120px;top:1010px;font-size:15px;line-height:20px;color:#444">最近</div>
<div style="left:0;top:1030px;width:343px;height:3px;background:#dcdcdc"></div>
<div style="left:343px;top:1030px;width:1237px;height:3px;background:#3a3a3a"></div>
<div style="left:918px;top:1030px;width:107px;height:3px;background:#c9752c"></div>
<div style="left:1242px;top:1030px;width:106px;height:3px;background:#666"></div>
</div>
</body>
</html>
